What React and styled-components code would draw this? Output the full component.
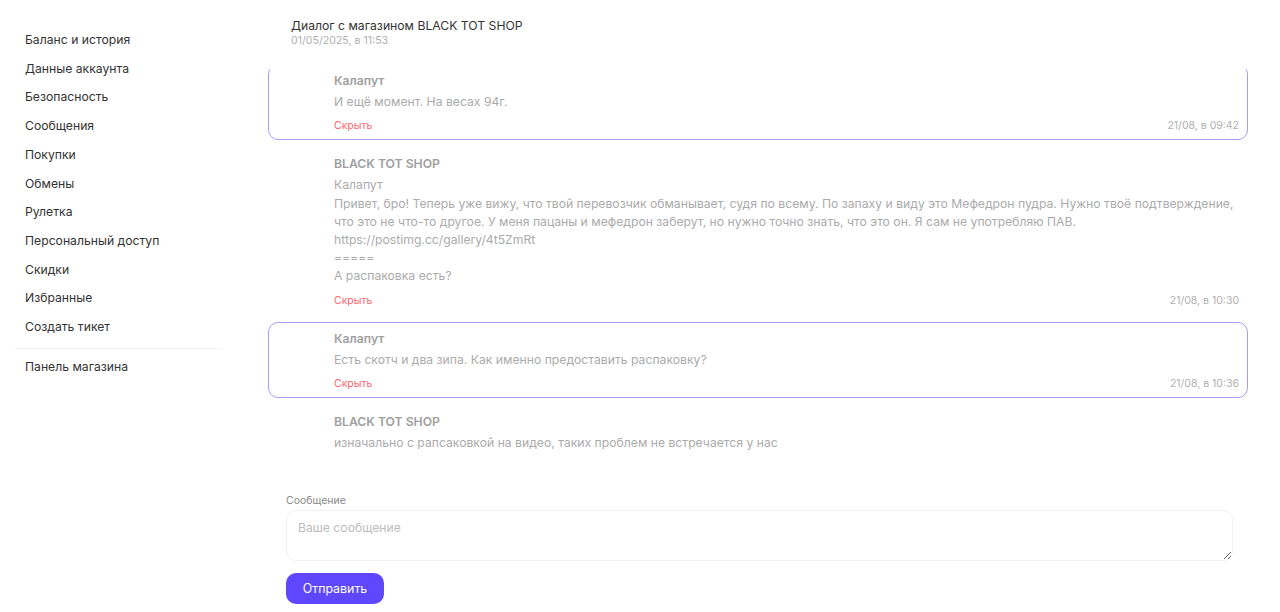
import React from 'react';
import styled, { createGlobalStyle } from 'styled-components';

const GlobalStyle = createGlobalStyle`
    body {
        margin: 0;
        background: #fff;
        font-family: Inter, "Noto Sans", sans-serif;
        color: #333;
    }
`

//layout
const Page = styled.div`
    display: grid;
    grid-template-columns: 268px 980px;
    height: 612px;
    overflow: hidden;
`
const Sidebar = styled.nav`
    display: flex;
    flex-direction: column;
    padding-top: 26px;
`
const NavItem = styled.a`
    display: block;
    padding: 5px 0 5px 25px;
    font-size: 12.2px;
    line-height: 18.7px;
    color: #333;
    text-decoration: none;
    cursor: pointer;
`
const Divider = styled.div`
    height: 1px;
    background: #f3f3f3;
    margin: 6px 46px 4px 14px;
`
const Main = styled.main`
    display: flex;
    flex-direction: column;
    padding-top: 17px;
`
const Header = styled.div`
    padding-left: 23px;
`
const Title = styled.div`
    font-size: 12.2px;
    line-height: 17px;
    color: #333;
`
const SubDate = styled.div`
    font-size: 10.6px;
    line-height: 14px;
    color: #b0b0b0;
`
const List = styled.div`
    margin-top: 21px;
    height: 390px;
    display: flex;
    flex-direction: column;
    justify-content: flex-end;
    gap: 7px;
    overflow: hidden;
`
const Message = styled.div`
    flex-shrink: 0;
    border: 1px solid ${p => p.$own ? '#a89cf8' : 'transparent'};
    border-radius: 10px;
    padding: 8px 8px 6px 65px;
`
const Author = styled.div`
    font-size: 12.2px;
    font-weight: 600;
    line-height: 16px;
    color: #a0a0a0;
`
const Body = styled.div`
    margin-top: 4px;
    font-size: 12.2px;
    line-height: 18.2px;
    color: #ababab;
    white-space: pre-line;
`
const Footer = styled.div`
    margin-top: 8px;
    display: flex;
    justify-content: space-between;
    font-size: 10.5px;
    line-height: 14px;
`
const HideLink = styled.span`
    color: #ff6670;
    cursor: pointer;
`
const Time = styled.span`
    color: #b0b0b0;
`
const Form = styled.form`
    margin-top: 35px;
    padding: 0 15px 0 18px;
    display: flex;
    flex-direction: column;
    align-items: flex-start;
`
const Label = styled.label`
    font-size: 10.5px;
    line-height: 14px;
    color: #8a8a8a;
`
const TextArea = styled.textarea`
    box-sizing: border-box;
    margin-top: 2px;
    width: 100%;
    height: 51px;
    padding: 8px 11px;
    border: 1px solid #f1f1f1;
    border-radius: 10px;
    font-family: inherit;
    font-size: 12.2px;
    line-height: 17px;
    color: #333;
    resize: vertical;
    outline: none;
    &::placeholder {
        color: #bdbdbd;
    }
`
const SendButton = styled.button`
    margin-top: 12px;
    width: 98px;
    height: 31px;
    border: none;
    border-radius: 10px;
    background: #5e47ff;
    color: #fff;
    font-family: inherit;
    font-size: 12.4px;
    cursor: pointer;
`
//////////////////////////////////////////////

const navLinks = [
    'Баланс и история',
    'Данные аккаунта',
    'Безопасность',
    'Сообщения',
    'Покупки',
    'Обмены',
    'Рулетка',
    'Персональный доступ',
    'Скидки',
    'Избранные',
    'Создать тикет',
]

const messages = [
    { author: 'Калапут', own: true, text: 'И ещё момент. На весах 94г.', time: '21/08, в 09:42' },
    {
        author: 'BLACK TOT SHOP', own: false, time: '21/08, в 10:30',
        text: 'Калапут\nПривет, бро! Теперь уже вижу, что твой перевозчик обманывает, судя по всему. По запаху и виду это Мефедрон пудра. Нужно твоё подтверждение, что это не что-то другое. У меня пацаны и мефедрон заберут, но нужно точно знать, что это он. Я сам не употребляю ПАВ.\nhttps://postimg.cc/gallery/4t5ZmRt\n=====\nА распаковка есть?',
    },
    { author: 'Калапут', own: true, text: 'Есть скотч и два зипа. Как именно предоставить распаковку?', time: '21/08, в 10:36' },
    { author: 'BLACK TOT SHOP', own: false, text: 'изначально с рапсаковкой на видео, таких проблем не встречается у нас' },
]

const App = () => {
    const onSubmit = evt => {
        evt.preventDefault();
    }

    return (
        <>
            <GlobalStyle />
            <Page>
                <Sidebar>
                    {navLinks.map(link => <NavItem key={link}>{link}</NavItem>)}
                    <Divider />
                    <NavItem>Панель магазина</NavItem>
                </Sidebar>
                <Main>
                    <Header>
                        <Title>Диалог с магазином BLACK TOT SHOP</Title>
                        <SubDate>01/05/2025, в 11:53</SubDate>
                    </Header>
                    <List>
                        {messages.map((m, i) => (
                            <Message key={i} $own={m.own}>
                                <Author>{m.author}</Author>
                                <Body>{m.text}</Body>
                                {m.time && (
                                    <Footer>
                                        <HideLink>Скрыть</HideLink>
                                        <Time>{m.time}</Time>
                                    </Footer>
                                )}
                            </Message>
                        ))}
                    </List>
                    <Form onSubmit={onSubmit}>
                        <Label htmlFor='msg'>Сообщение</Label>
                        <TextArea id='msg' placeholder='Ваше сообщение' />
                        <SendButton type='submit'>Отправить</SendButton>
                    </Form>
                </Main>
            </Page>
        </>
    )
}

export default App;
